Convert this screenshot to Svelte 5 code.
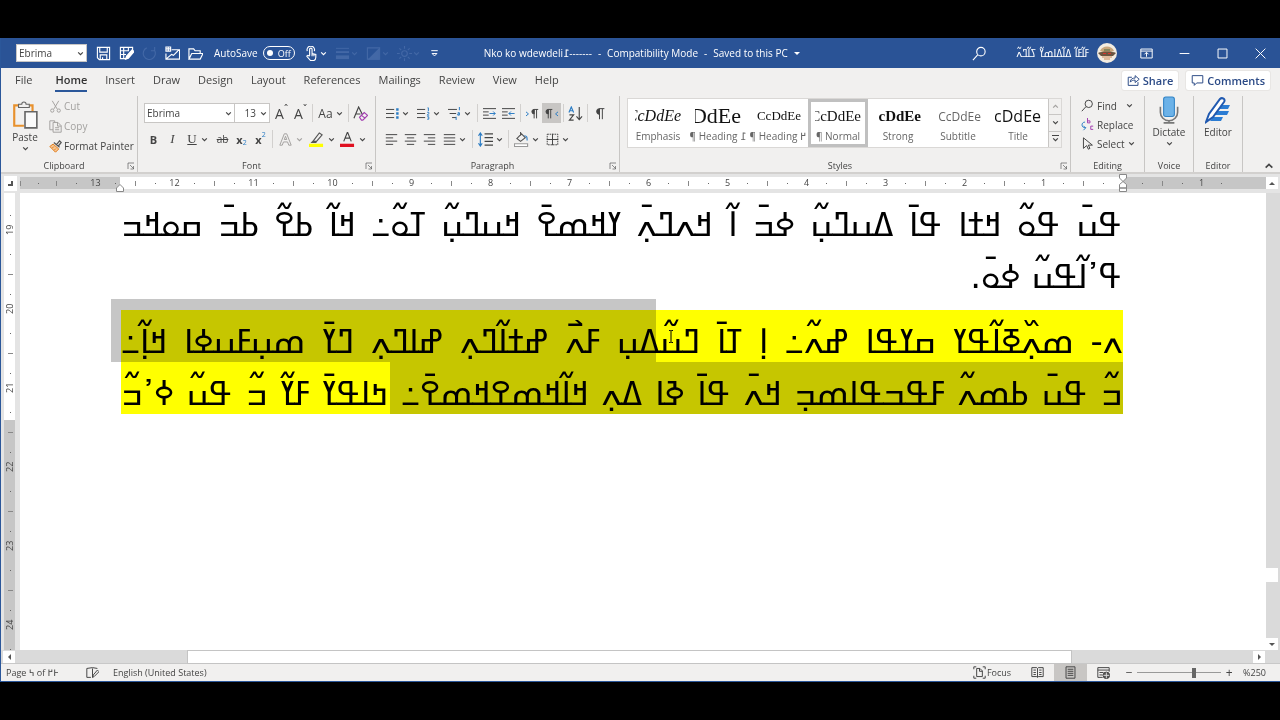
<script>
	const tabs = ['File', 'Home', 'Insert', 'Draw', 'Design', 'Layout', 'References', 'Mailings', 'Review', 'View', 'Help'];

	const styles = [
		{ name: 'Emphasis', cls: 'emphasis', sample: 'CcDdEe' },
		{ name: '¶ Heading ߁', cls: 'heading1', sample: 'DdEe' },
		{ name: '¶ Heading ߂', cls: 'heading2', sample: 'CcDdEe' },
		{ name: '¶ Normal', cls: 'normal', sample: 'CcDdEe' },
		{ name: 'Strong', cls: 'strong', sample: 'cDdEe' },
		{ name: 'Subtitle', cls: 'subtitle', sample: 'CcDdEe' },
		{ name: 'Title', cls: 'title', sample: 'cDdEe' }
	];

	const hRuler = [13, 12, 11, 10, 9, 8, 7, 6, 5, 4, 3, 2, 1, '', 1];
	const vRuler = [19, 20, 21, 22, 23, 24];

	let fontName = $state('Ebrima');
	let fontSize = $state('13');
	let zoom = $state(68);
	let activeTab = $state('Home');
	let activeStyle = $state('¶ Normal');

	// icon bodies, drawn on a 16 x 16 grid
	const icons = {
		save: '<path d="M1.5 1.5h13v13h-11l-2-2z"/><path d="M4 1.5v5h8v-5M4.500 14.500v-5h7v5M7 12v2.500"/>',
		saveAs: '<path d="M8 13.500H1.500v-12h13V5M1.500 5h8M1.500 9h6M5 1.500v12M10 1.500v4"/><path d="M7 14l1-3 6-7 2 2-6 7z" fill="#fff"/>',
		redo: '<path d="M13 4a6.500 6.500 0 1 1-8-2M13.500 1v4h-4"/>',
		mail: '<path d="M7 4h8.500v10H1V8M1 14l6-5 2 1 6-6"/><path d="M1 1h5v4.500H1zM3.500 1v4.500M1 3h5"/>',
		open: '<path d="M1 14V3h5l1.500 2H13v3M1 14l3-6h12l-3 6z"/>',
		touch: '<path d="M6 10V3.500a1.300 1.300 0 0 1 2.600 0V8l4 1v3c0 2-1 3-2 3.500H7L3 11c0-1 1-1.500 3 0M8.600 8v3M10.600 8.500v2.500"/><path d="M3.500 5.500a4 4 0 1 1 7.500 0"/>',
		bars: '<path d="M1 2.500h14" stroke-width="1"/><path d="M1 6.500h14" stroke-width="2"/><path d="M1 12h14" stroke-width="4"/>',
		fill: '<path d="M1.500 2h13v12h-13z"/><path d="M14 3v11H3z" fill="currentColor"/>',
		sun: '<circle cx="8" cy="8" r="3"/><path d="M8 0v3M8 13v3M0 8h3M13 8h3M2.500 2.500l2 2M11.500 11.500l2 2M13.500 2.500l-2 2M4.500 11.500l-2 2"/>',
		customize: '<path d="M4 4.500h8"/><path d="M5 8h6l-3 3z"/>',
		search: '<circle cx="9.500" cy="6" r="4.500"/><path d="M6 9.500L1 15"/>',
		ribbon: '<path d="M1 2.500h14v11H1zM1 5h14"/><path d="M8 12V7M5.500 9L8 6.500 10.500 9"/>',
		min: '<path d="M2 8h12"/>',
		max: '<path d="M2.500 2.500h11v11h-11z"/>',
		close: '<path d="M2 2l12 12M14 2L2 14"/>',
		share: '<path d="M6 4H1.500v10h12v-4"/><path d="M4 10c0-4 3-5 6-5V2l5 4.500-5 4V7.500C7.500 7.500 5.500 8 4 10z"/>',
		comment: '<path d="M1.500 2h13v9H7l-3 3v-3H1.500z"/>',
		cut: '<path d="M4 1l6 10M12 1L6 11"/><circle cx="4" cy="13" r="2"/><circle cx="12" cy="13" r="2"/>',
		copy: '<path d="M5 12H1V1h6v2"/><path d="M5 3h6l4 4v8H5zM10.500 3v4.500H15M7.500 9.500h5M7.500 12h5"/>',
		painter: '<path d="M9 6l4-5 2 2-4 5M6 3l7 6" stroke="#555" stroke-width="1.500"/><path d="M5 5l7 6-4 4-7-7z" fill="#f6c591" stroke="#e07b1a"/><path d="M4 10l2-2M6.500 12.500l2-2" stroke="#e07b1a"/>',
		clear: '<path d="M1 13L6 1l4 8M3 8.500h5" stroke="#444"/><path d="M7 12l5-5 3.500 3-5 5H9z" stroke="#a33fb0"/><path d="M9 10l4 3" stroke="#a33fb0"/>',
		effects: '<path d="M1 15L6.500 1h3L15 15h-3l-1.500-4h-5L4 15zM6.500 8h3L8 4z"/>',
		marker: '<path d="M5 9l6-8 3 2-6 7H5zM5 9l-2 2h5" stroke="#555"/><path d="M0 12.500h15V16H0z" fill="#ff0" stroke="none"/>',
		color: '<path d="M4 10L8 0l4 10M5.300 6.500h5.400" stroke="#444"/><path d="M0 12.500h15V16H0z" fill="#e01020" stroke="none"/>',
		bullets: '<path d="M0 3h10M0 8h10M0 13h10"/><path d="M12.500 1.500h3v3h-3zM12.500 6.500h3v3h-3zM12.500 11.500h3v3h-3z" fill="#2b7cc4" stroke="none"/>',
		numbering: '<path d="M0 3h10M0 8h10M0 13h10"/><path d="M13 1h1v4M12.500 6.500h2v1.500l-2 2h2.500M12.500 12h2v3h-2" stroke="#2b7cc4"/>',
		multilevel: '<path d="M0 3h11M2 8h8M5 13h5"/><path d="M14 0v4M12 7h2v3h-2v-1.500h2M10 12v4" stroke="#2b7cc4"/>',
		indent: '<path d="M0 2h16M0 6h7M0 10h7M0 14h16"/><path d="M8 8h7M12.500 5.500L15 8l-2.500 2.500" stroke="#2b7cc4"/>',
		outdent: '<path d="M0 2h16M0 6h7M0 10h7M0 14h16"/><path d="M8.500 8h7M11 5.500L8.500 8l2.500 2.500" stroke="#2b7cc4"/>',
		ltr: '<path d="M0 6l3 2.500L0 11" stroke="#2b7cc4"/><path d="M10 14V3h5M13 3v11"/><path d="M10 3a2.500 2.500 0 0 0 0 5.500z" fill="currentColor"/>',
		rtl: '<path d="M16 6l-3 2.500 3 2.500" stroke="#2b7cc4"/><path d="M4 14V3h5M7 3v11"/><path d="M4 3a2.500 2.500 0 0 0 0 5.500z" fill="currentColor"/>',
		sort: '<path d="M1 7l2.500-6L6 7M2 5h3" stroke="#2b7cc4"/><path d="M1.500 9.500h4.500L1.500 15H6M12 1v13M9 11l3 3.500 3-3.500"/>',
		pilcrow: '<path d="M8 15V2h6M11.500 2v13"/><path d="M8 2a3.500 3.500 0 0 0 0 7z" fill="currentColor"/>',
		left: '<path d="M1 2h14M1 6h9M1 10h14M1 14h9"/>',
		center: '<path d="M1 2h14M3.500 6h9M1 10h14M3.500 14h9"/>',
		right: '<path d="M1 2h14M6 6h9M1 10h14M6 14h9"/>',
		justify: '<path d="M1 2h14M1 6h14M1 10h14M1 14h14"/>',
		spacing: '<path d="M7 2h9M7 6h9M7 10h9M7 14h9"/><path d="M2.500 1v14M.5 4l2-3 2 3M.5 12l2 3 2-3" stroke="#2b7cc4"/>',
		shading: '<path d="M3 7l5-5 4 4-5 4zM7 4V0" stroke="#555"/><path d="M11 4c3 0 3 2 3 5" stroke="#2b7cc4"/><path d="M.5 12.500h14V15.500H.5z" fill="#fff" stroke="#999"/>',
		borders: '<path d="M1.500 1.500h13v13h-13z" stroke-dasharray="2 1"/><path d="M8 1v14M1 8h14"/>',
		replace: '<path d="M8 0v6M8 3.500h3V6H8M15 10h-3v4h3" stroke="#a33fb0"/><path d="M5 5C0 5 0 12 5 12M3 10l3 2-3 3" stroke="#2b7cc4"/>',
		select: '<path d="M3 1v13l4-3.500 2 4.500 2-1-2-4h5z"/>',
		proof: '<path d="M8 3v11M1 3l7-1 6 1M1 3v11h5"/><path d="M8 14l1-3 5-6 2 2-6 6z"/>',
		focus: '<path d="M1 4V1h3M12 1h3v3M15 12v3h-3M4 15H1v-3"/><path d="M4.500 3h4l3 3v7h-7zM8 3v3.500h3.500"/>',
		read: '<path d="M8 3v11M1 2h6l1 1 1-1h6v11H9l-1 1-1-1H1zM3 5h3M3 8h3M3 10.500h3M10 5h3M10 8h3M10 10.500h3"/>',
		print: '<path d="M2.500 1h11v14h-11zM4.500 4h7M4.500 6.500h7M4.500 9h7M4.500 11.500h7"/>',
		web: '<path d="M7 14H1V2h14v5M1 5h14M3 8h5M3 11h4"/><circle cx="11.500" cy="11.500" r="4" fill="#555"/><path d="M8 11.500h7M11.500 8v7" stroke="#ddd"/>',
		launch: '<path d="M2 14V2h12M6 6l7 7M13 8v6H7"/>'
	};
</script>

{#snippet icon(name, size = 'm')}
	<svg class="ico {size}" viewBox="0 0 16 16" aria-hidden="true">{@html icons[name]}</svg>
{/snippet}

{#snippet chevron()}
	<svg class="chev" viewBox="0 0 6 6" aria-hidden="true"><path d="M1 2l2 2 2-2" /></svg>
{/snippet}

{#snippet footer(label, launcher = true)}
	<div class="footer">
		<span>{label}</span>
		{#if launcher}
			<button aria-label="{label} settings">{@render icon('launch', 'xs')}</button>
		{/if}
	</div>
{/snippet}

<div class="screen">
	<div class="window">
		<header class="titlebar">
			<label class="combo quickfont">
				<select bind:value={fontName} aria-label="Font">
					<option>Ebrima</option>
				</select>
				{@render chevron()}
			</label>
			<div class="quick">
				<button aria-label="Save">{@render icon('save')}</button>
				<button aria-label="Save as">{@render icon('saveAs')}</button>
				<button aria-label="Redo" class="dim">{@render icon('redo')}</button>
				<button aria-label="Email">{@render icon('mail')}</button>
				<button aria-label="Open">{@render icon('open')}</button>
			</div>
			<label class="autosave">
				AutoSave
				<input type="checkbox" />
				<span class="toggle">Off</span>
			</label>
			<div class="quick tools">
				<button aria-label="Touch mode">{@render icon('touch')}{@render chevron()}</button>
				<button aria-label="Line weight" class="dim">{@render icon('bars')}{@render chevron()}</button>
				<button aria-label="Shape fill" class="dim">{@render icon('fill')}{@render chevron()}</button>
				<button aria-label="Brightness" class="dim">{@render icon('sun')}{@render chevron()}</button>
				<button aria-label="Customize toolbar">{@render icon('customize', 's')}</button>
			</div>
			<div class="doctitle">
				<span>Nko ko wdewdeli߁-------</span><span>-</span><span>Compatibility Mode</span><span>-</span><span>Saved to this PC</span>
				<i class="down"></i>
			</div>
			<div class="account">
				<button aria-label="Search">{@render icon('search')}</button>
				<span class="user" dir="rtl">ߓߊ߬ߓߊ߬ ߡߊ߬ߡߊߘߌ߬ ߖߊ߬ߣߍ߬</span>
				<svg class="avatar" viewBox="0 0 20 20" aria-hidden="true">
					<circle cx="10" cy="10" r="10" fill="#f3ece0" />
					<path d="M3 8c2-6 12-6 14 0l-3 1H6z" fill="#c9a67c" />
					<path d="M1 10c4-2 14-2 18 0l-3 3H4z" fill="#6b5540" />
					<path d="M5 14h10M7 16h6" stroke="#c98a5a" />
					<path d="M6 10.500h3M11 10.500h3" stroke="#d8362c" />
					<path d="M7 7h6" stroke="#48683e" />
				</svg>
			</div>
			<div class="winbtns">
				<button aria-label="Ribbon display options">{@render icon('ribbon', 's')}</button>
				<button aria-label="Minimize">{@render icon('min', 's')}</button>
				<button aria-label="Maximize">{@render icon('max', 's')}</button>
				<button aria-label="Close">{@render icon('close', 's')}</button>
			</div>
		</header>

		<nav class="tabs">
			{#each tabs as tab}
				<a href="#{tab}" class:active={tab === activeTab} onclick={() => (activeTab = tab)}>{tab}</a>
			{/each}
			<div class="collab">
				<button>{@render icon('share', 's')}Share</button>
				<button>{@render icon('comment', 's')}Comments</button>
			</div>
		</nav>

		<section class="ribbon">
			<div class="group clipboard">
				<div class="content">
					<button class="big">
						<svg class="paste" viewBox="0 0 24 26" aria-hidden="true">
							<path d="M8 4H2v19h9M16 4h3v6" fill="none" stroke="#e8912d" stroke-width="2" />
							<path d="M6 6V3h3a2 2 0 0 1 4 0h3v3z" fill="#f1f0ef" stroke="#666" />
							<path d="M12 10h11v15H12z" fill="#fafafa" stroke="#666" stroke-width="1.500" />
						</svg>
						Paste
						{@render chevron()}
					</button>
					<div class="stack">
						<button class="off">{@render icon('cut', 's')}Cut</button>
						<button class="off">{@render icon('copy', 's')}Copy</button>
						<button>{@render icon('painter', 's')}Format Painter</button>
					</div>
				</div>
				{@render footer('Clipboard')}
			</div>

			<div class="group font">
				<div class="rows">
					<div class="row">
						<label class="combo name">
							<select bind:value={fontName} aria-label="Font name">
								<option>Ebrima</option>
							</select>
							{@render chevron()}
						</label>
						<label class="combo size">
							<select bind:value={fontSize} aria-label="Font size">
								<option>13</option>
							</select>
							{@render chevron()}
						</label>
						<button class="resize">A<sup>ˆ</sup></button>
						<button class="resize">A<sup>ˇ</sup></button>
						<i class="sep"></i>
						<button class="case">Aa{@render chevron()}</button>
						<i class="sep"></i>
						<button aria-label="Clear formatting">{@render icon('clear')}</button>
					</div>
					<div class="row letters">
						<button><b>B</b></button>
						<button><em>I</em></button>
						<button><u>U</u>{@render chevron()}</button>
						<button><s>ab</s></button>
						<button><b>x</b><sub>2</sub></button>
						<button><b>x</b><sup>2</sup></button>
						<i class="sep"></i>
						<button aria-label="Text effects" class="off">{@render icon('effects', 's')}{@render chevron()}</button>
						<button aria-label="Highlight">{@render icon('marker')}{@render chevron()}</button>
						<button aria-label="Font color">{@render icon('color')}{@render chevron()}</button>
					</div>
				</div>
				{@render footer('Font')}
			</div>

			<div class="group paragraph">
				<div class="rows">
					<div class="row">
						<button aria-label="Bullets">{@render icon('bullets', 's')}{@render chevron()}</button>
						<button aria-label="Numbering">{@render icon('numbering', 's')}{@render chevron()}</button>
						<button aria-label="Multilevel list">{@render icon('multilevel', 's')}{@render chevron()}</button>
						<i class="sep"></i>
						<button aria-label="Decrease indent">{@render icon('indent', 's')}</button>
						<button aria-label="Increase indent">{@render icon('outdent', 's')}</button>
						<i class="sep"></i>
						<button aria-label="Left to right">{@render icon('ltr', 's')}</button>
						<button aria-label="Right to left" class="pressed">{@render icon('rtl', 's')}</button>
						<i class="sep"></i>
						<button aria-label="Sort">{@render icon('sort')}</button>
						<i class="sep"></i>
						<button aria-label="Show marks">{@render icon('pilcrow', 's')}</button>
					</div>
					<div class="row">
						<button aria-label="Align left">{@render icon('left', 's')}</button>
						<button aria-label="Center">{@render icon('center', 's')}</button>
						<button aria-label="Align right">{@render icon('right', 's')}</button>
						<button aria-label="Justify">{@render icon('justify', 's')}{@render chevron()}</button>
						<i class="sep"></i>
						<button aria-label="Line spacing">{@render icon('spacing')}{@render chevron()}</button>
						<i class="sep"></i>
						<button aria-label="Shading">{@render icon('shading')}{@render chevron()}</button>
						<button aria-label="Borders">{@render icon('borders', 's')}{@render chevron()}</button>
					</div>
				</div>
				{@render footer('Paragraph')}
			</div>

			<div class="group styles">
				<div class="gallery">
					<div class="cards">
						{#each styles as s}
							<button class="card" class:current={s.name === activeStyle} onclick={() => (activeStyle = s.name)}>
								<span class="sample {s.cls}">{s.sample}</span>
								<span class="stylename">{s.name}</span>
							</button>
						{/each}
					</div>
					<div class="scroller">
						<button aria-label="Previous styles" class="up">{@render chevron()}</button>
						<button aria-label="Next styles">{@render chevron()}</button>
						<button aria-label="All styles" class="more">{@render chevron()}</button>
					</div>
				</div>
				{@render footer('Styles')}
			</div>

			<div class="group editing">
				<div class="stack">
					<button>{@render icon('search', 's')}Find <i class="space"></i>{@render chevron()}</button>
					<button>{@render icon('replace', 's')}Replace</button>
					<button>{@render icon('select', 's')}Select{@render chevron()}</button>
				</div>
				{@render footer('Editing', false)}
			</div>

			<div class="group voice">
				<button class="big">
					<svg class="paste" viewBox="0 0 24 26" aria-hidden="true">
						<path d="M4 10v5a8 8 0 0 0 16 0v-5M12 23v2M7 25h10" fill="none" stroke="#777" stroke-width="1.500" />
						<rect x="7" y="1" width="10" height="18" rx="2" fill="#6cb2e8" stroke="#3384c6" />
					</svg>
					Dictate
					{@render chevron()}
				</button>
				{@render footer('Voice', false)}
			</div>

			<div class="group editor">
				<button class="big">
					<svg class="paste" viewBox="0 0 26 26" aria-hidden="true">
						<path d="M13 8h12l-2 4H11zM10 14h14l-2 4H8zM8 20h10l-2 4H5z" fill="#2b7cd3" />
						<path d="M1 25l3-8L15 2c2-2 6 0 4 3L8 20z" fill="#fff" stroke="#2059b0" stroke-width="2" />
					</svg>
					Editor
				</button>
				{@render footer('Editor', false)}
			</div>

			<button class="collapse" aria-label="Collapse ribbon">{@render chevron()}</button>
		</section>

		<main class="workspace">
			<button class="corner" aria-label="Tab stop"><i></i></button>
			<div class="hruler">
				<div class="scale">
					<div class="unit part"><i class="tick"></i><i class="dot"></i></div>
					{#each hRuler as n}
						<div class="unit"><i class="tick"></i><i class="dot"></i><span>{n}</span><i class="dot"></i></div>
					{/each}
				</div>
				<svg class="marker start" viewBox="0 0 8 8"><path d="M.5 7.500V4L4 .5 7.500 4v3.500z" /></svg>
				<svg class="marker end" viewBox="0 0 8 18"><path d="M.5.5h7V4L4 7.500.5 4zM.5 14v-3.500L4 7.500l3.500 3V14zM.5 14h7v3.500h-7z" /></svg>
			</div>
			<button class="arrow" aria-label="Scroll up"><i class="tri n"></i></button>

			<div class="vruler">
				<div class="vscale">
					{#each vRuler as n}
						<div class="vunit"><i class="dot"></i><span>{n}</span><i class="dot"></i><i class="tick"></i></div>
					{/each}
				</div>
			</div>
			<article class="doc" dir="rtl" lang="nqo">
				<p>
					<span class="line">ߟߎ߫ ߟߋ߬ ߞߙߊ ߟߊ߫ ߡߎߣߎ߲߬ ߦߏ߫ ߊ߬ ߞߍߣߍ߲߫ ߌߞߘߐ߫ ߞߎߣߎ߲߬ ߠߋ߬߸ ߞߊ߬ ߕߐ߬ ߕߏ߫ ߛߋߞߏ</span>
					<span class="line last">ߟߴߊ߬ߟߎ߬ ߦߋ߫.</span>
				</p>
				<p class="highlight">
					<span class="line">
						ߍ- ߘߍ߲߰ߧߊ߬ߟߌ ߛߌߟߊ ߝߍ߬߸ ߊ߲ ߠߊ߫ ߣߎ߬ߡߎ߲ ߓߍ߯ ߝߙߊ߬ߣߍ߲ ߝߊߣߍ߲ ߣߌ߫ ߘߎ߲ߓߎߦߊ ߞߊ߲߬߸<i class="selected first"></i>
						<svg class="ibeam" viewBox="0 0 6 13" aria-hidden="true"><path d="M1 .5h1.500l.5.5.5-.5H5M3 1v11M1 12.500h1.500L3 12l.5.500H5" /></svg>
					</span>
					<span class="line">ߏ߬ ߟߎ߫ ߕߘߍ߬ ߓߟߏߟߊߘߏ߲ ߞߍ߫ ߟߊ߫ ߢߊ ߡߍ߲ ߞߊ߬ߞߘߐߞߘߐ߫߸ ߤߊߟߌ߫ ߓߌ߬ ߏ߬ ߟߎ߬ ߦߴߏ߬<i class="selected second"></i></span>
				</p>
			</article>
			<div class="vscroll">
				<i class="thumb"></i>
				<button class="arrow" aria-label="Scroll down"><i class="tri s"></i></button>
			</div>

			<div class="hscroll">
				<button class="arrow" aria-label="Scroll left"><i class="tri w"></i></button>
				<div class="track"><i class="thumb"></i></div>
				<button class="arrow" aria-label="Scroll right"><i class="tri e"></i></button>
			</div>
		</main>

		<footer class="status">
			<span class="pages">Page ߆ of ߅߂</span>
			<button aria-label="Proofing">{@render icon('proof', 's')}</button>
			<span class="lang">English (United States)</span>
			<div class="views">
				<button>{@render icon('focus', 's')}Focus</button>
				<button aria-label="Read mode">{@render icon('read', 's')}</button>
				<button aria-label="Print layout" class="pressed">{@render icon('print', 's')}</button>
				<button aria-label="Web layout">{@render icon('web', 's')}</button>
			</div>
			<div class="zoom">
				<button aria-label="Zoom out">−</button>
				<input type="range" min="0" max="100" bind:value={zoom} aria-label="Zoom" />
				<button aria-label="Zoom in">+</button>
				<span>%250</span>
			</div>
		</footer>
	</div>
</div>

<style>
	:global(body) {
		margin: 0;
		background: #000;
	}

	.screen {
		box-sizing: border-box;
		min-height: 100vh;
		padding: 38px 0;
		display: flex;
		background: #000;
		font-family: 'Open Sans', 'Noto Sans', 'DejaVu Sans', sans-serif;
		font-size: 10px;
		color: #444;
	}

	.window {
		flex: 1;
		min-width: 0;
		display: flex;
		flex-direction: column;
		border-left: 1px solid #2b579a;
		border-bottom: 1px solid #2b579a;
		background: #f1f0ef;
	}

	button,
	select {
		font: inherit;
		color: inherit;
		background: none;
		border: 0;
		padding: 0;
		margin: 0;
	}

	button {
		display: flex;
		align-items: center;
		justify-content: center;
		white-space: nowrap;
	}

	.ico {
		width: 15px;
		height: 15px;
		flex: none;
		fill: none;
		stroke: currentColor;
		stroke-width: 1.2;
	}

	.ico.s {
		width: 13px;
		height: 13px;
	}

	.ico.xs {
		width: 8px;
		height: 8px;
	}

	.chev {
		width: 7px;
		height: 7px;
		flex: none;
		fill: none;
		stroke: currentColor;
	}

	/* title bar */
	.titlebar {
		display: flex;
		align-items: center;
		height: 30px;
		background: #2a5396;
		color: #fff;
	}

	.combo {
		box-sizing: border-box;
		display: flex;
		align-items: center;
		height: 20px;
		padding: 0 2px;
		background: #fff;
		border: 1px solid #c8c6c4;
		color: #444;
	}

	.combo select {
		appearance: none;
		flex: 1;
		min-width: 0;
		outline: 0;
	}

	.quickfont {
		width: 71px;
		height: 18px;
		margin-left: 15px;
	}

	.quick {
		display: flex;
		gap: 8px;
		margin-left: 9px;
	}

	.dim {
		color: #4368a6;
	}

	.autosave {
		display: flex;
		align-items: center;
		gap: 5px;
		margin-left: 11px;
	}

	.autosave input {
		position: absolute;
		opacity: 0;
	}

	.toggle {
		box-sizing: border-box;
		display: flex;
		align-items: center;
		gap: 5px;
		width: 32px;
		height: 14px;
		padding-left: 3px;
		border: 1px solid #fff;
		border-radius: 7px;
		font-size: 9px;
	}

	.toggle::before {
		content: '';
		width: 6px;
		height: 6px;
		border-radius: 50%;
		background: #fff;
	}

	.tools button {
		gap: 1px;
	}

	.doctitle {
		display: flex;
		align-items: center;
		gap: 6px;
		margin: 0 auto 0 43px;
		white-space: nowrap;
	}

	.down {
		border: 3px solid transparent;
		border-top-color: #fff;
		border-bottom: 0;
	}

	.account {
		display: flex;
		align-items: center;
		gap: 8px;
	}

	.user {
		width: 74px;
		margin-left: 20px;
		font-family: 'DejaVu Sans', sans-serif;
		white-space: nowrap;
	}

	.avatar {
		width: 20px;
		height: 20px;
	}

	.winbtns {
		display: flex;
		gap: 25px;
		margin: 0 13px 0 23px;
	}

	/* tabs */
	.tabs {
		display: flex;
		align-items: flex-start;
		gap: 18px;
		height: 28px;
		padding: 0 10px 0 14px;
		font-size: 11px;
	}

	.tabs a {
		color: #444;
		text-decoration: none;
		line-height: 20px;
		padding-top: 2px;
	}

	.tabs a:first-child {
		margin-right: 5px;
	}

	.tabs a.active {
		font-weight: 600;
		color: #333;
		border-bottom: 2px solid #2b579a;
	}

	.collab {
		display: flex;
		gap: 8px;
		margin: 3px 0 0 auto;
	}

	.collab button {
		gap: 3px;
		height: 19px;
		padding: 0 5px;
		background: #fff;
		border-radius: 2px;
		color: #2b4a86;
		font-weight: 600;
		outline: 1px solid #e8e6e4;
	}

	/* ribbon */
	.ribbon {
		display: flex;
		height: 76px;
		border-bottom: 2px solid #d2d0ce;
	}

	.group {
		position: relative;
		box-sizing: border-box;
		display: flex;
		flex-direction: column;
		justify-content: space-between;
		border-right: 1px solid #c8c6c4;
	}

	.clipboard {
		width: 137px;
	}

	.font {
		width: 238px;
	}

	.paragraph {
		width: 244px;
	}

	.styles {
		flex: 1;
		min-width: 0;
	}

	.editing {
		width: 74px;
	}

	.voice,
	.editor {
		width: 49px;
	}

	.footer {
		display: flex;
		align-items: center;
		height: 13px;
		font-size: 9px;
	}

	.footer span {
		flex: 1;
		text-align: center;
	}

	.footer button {
		margin-right: 2px;
	}

	.content {
		display: flex;
	}

	.big {
		flex-direction: column;
		gap: 1px;
		width: 48px;
		line-height: 14px;
	}

	.paste {
		width: 26px;
		height: 28px;
	}

	.off {
		color: #a3a19f;
	}

	.stack {
		display: flex;
		flex-direction: column;
		align-items: flex-start;
	}

	.stack button {
		gap: 2px;
		height: 20px;
	}

	.editing .stack {
		padding-left: 10px;
	}

	.editing .stack button {
		gap: 3px;
		height: 19px;
	}

	.space {
		width: 3px;
	}

	.rows {
		display: flex;
		flex-direction: column;
		gap: 6px;
		padding: 7px 0 0 6px;
	}

	.row {
		display: flex;
		align-items: center;
		height: 20px;
	}

	.row button {
		height: 20px;
		min-width: 19px;
		gap: 3px;
	}

	.row button:has(.chev) {
		min-width: 31px;
	}

	.sep {
		width: 1px;
		height: 18px;
		margin: 0 2px;
		background: #d2d0ce;
	}

	.name {
		width: 91px;
	}

	.size {
		width: 36px;
		margin: 0 2px 0 -1px;
	}

	.size select {
		text-align: right;
		padding-right: 4px;
	}

	.row .resize {
		font-size: 14px;
		gap: 0;
	}

	.resize sup {
		color: #444;
		font-size: 10px;
	}

	.row .case {
		font-size: 12px;
	}

	.letters button {
		font-size: 11px;
		gap: 0;
	}

	.letters button:has(.chev) {
		gap: 4px;
	}

	.letters em,
	.letters u {
		font-family: 'Liberation Serif', serif;
		font-size: 13px;
	}

	.letters s {
		font-size: 10px;
	}

	sup,
	sub {
		font-size: 7px;
		line-height: 8px;
		color: #2b7cc4;
	}

	sup {
		align-self: flex-start;
		padding-top: 2px;
	}

	sub {
		align-self: flex-end;
		padding-bottom: 2px;
	}

	.pressed {
		background: #c8c6c4;
	}

	/* styles gallery */
	.gallery {
		display: flex;
		height: 50px;
		margin: 2px 8px 0 7px;
		background: #fff;
		box-sizing: border-box;
		border: 1px solid #dad8d6;
	}

	.cards {
		flex: 1;
		min-width: 0;
		display: grid;
		grid-template-columns: repeat(7, 60px);
		justify-content: space-evenly;
	}

	.card {
		box-sizing: border-box;
		flex-direction: column;
		justify-content: space-between;
		padding: 4px 0 1px;
		border: 3px solid transparent;
	}

	.card.current {
		border-color: #c0c0c0;
	}

	.sample {
		display: flex;
		justify-content: flex-end;
		align-items: center;
		width: 46px;
		height: 20px;
		overflow: hidden;
		color: #111;
		font-family: 'Liberation Serif', serif;
		font-size: 15px;
	}

	.emphasis {
		font-style: italic;
		font-size: 16px;
	}

	.heading1 {
		font-size: 22px;
	}

	.heading2 {
		font-size: 13px;
	}

	.strong {
		font-weight: bold;
	}

	.subtitle {
		font-family: 'Open Sans', sans-serif;
		font-size: 12px;
		color: #666;
	}

	.title {
		font-family: 'Open Sans', sans-serif;
		font-size: 16px;
	}

	.stylename {
		color: #666;
		line-height: 14px;
	}

	.scroller {
		display: flex;
		flex-direction: column;
		width: 12px;
		border-left: 1px solid #c8c6c4;
	}

	.scroller button {
		flex: 1;
		background: #f1f0ef;
	}

	.scroller button + button {
		border-top: 1px solid #c8c6c4;
	}

	.up .chev,
	.collapse .chev {
		transform: rotate(180deg);
	}

	.up {
		color: #a3a19f;
	}

	.more {
		flex-direction: column;
	}

	.more::before {
		content: '';
		width: 7px;
		height: 1px;
		background: #444;
	}

	.collapse {
		align-self: flex-end;
		width: 37px;
		height: 12px;
		padding-left: 14px;
	}

	.collapse .chev {
		width: 10px;
		height: 10px;
	}

	/* document area */
	.workspace {
		flex: 1;
		display: grid;
		grid-template-columns: 19px minmax(0, 1fr) 14px;
		grid-template-rows: 19px 1fr 14px;
		background: #e4e4e4;
	}

	.corner {
		margin: 2px 3px;
		background: #fff;
	}

	.corner i {
		width: 3px;
		height: 3px;
		border: solid #555;
		border-width: 0 2px 2px 0;
	}

	.hruler {
		position: relative;
		height: 12px;
		margin: 3px 0 4px;
		background: linear-gradient(to right, #c6c6c6 100px, #fff 100px, #fff calc(100% - 143px), #c6c6c6 calc(100% - 143px));
	}

	.scale {
		display: flex;
		height: 12px;
		overflow: hidden;
	}

	.unit {
		flex: none;
		display: grid;
		grid-template-columns: repeat(4, 1fr);
		justify-items: start;
		align-items: center;
		width: 79px;
		font-size: 9px;
		line-height: 12px;
	}

	.part {
		grid-template-columns: 1fr 1fr;
		width: 36px;
	}

	.unit span {
		width: 12px;
		margin-left: -6px;
		text-align: center;
	}

	.tick {
		width: 1px;
		height: 5px;
		background: #888;
	}

	.dot {
		width: 1px;
		height: 1px;
		background: #666;
	}

	.marker {
		position: absolute;
		width: 8px;
		fill: #fff;
		stroke: #888;
	}

	.marker.start {
		left: 96px;
		bottom: -3px;
		height: 8px;
	}

	.marker.end {
		right: 139px;
		top: -3px;
		height: 18px;
	}

	.arrow {
		width: 12px;
		height: 12px;
		background: #fff;
	}

	.workspace > .arrow {
		margin-top: 3px;
	}

	.tri {
		border: 3px solid transparent;
	}

	.tri.n {
		border-bottom-color: #555;
		border-top: 0;
	}

	.tri.s {
		border-top-color: #555;
		border-bottom: 0;
	}

	.tri.w {
		border-right-color: #555;
		border-left: 0;
	}

	.tri.e {
		border-left-color: #555;
		border-right: 0;
	}

	.vruler {
		margin: 0 5px 0 3px;
		background: linear-gradient(#fff 227px, #c6c6c6 227px);
		contain: size;
		overflow: hidden;
	}

	.vscale {
		display: flex;
		flex-direction: column;
		padding-top: 3px;
	}

	.vunit {
		flex: none;
		display: grid;
		grid-template-rows: repeat(4, 1fr);
		justify-items: center;
		height: 79px;
		font-size: 9px;
	}

	.vunit i {
		align-self: end;
	}

	.vunit span {
		height: 12px;
		align-self: end;
		writing-mode: vertical-rl;
		transform: rotate(180deg);
		line-height: 12px;
		text-align: center;
	}

	.vunit .tick {
		width: 5px;
		height: 1px;
	}

	.doc {
		padding: 0 143px 0 101px;
		background: #fff;
		color: #000;
		font-family: 'DejaVu Sans', sans-serif;
		font-size: 34px;
	}

	p {
		margin: 0 0 13px;
	}

	.line {
		position: relative;
		display: block;
		padding-top: 10px;
		line-height: 42px;
		text-align: justify;
		text-align-last: justify;
		white-space: nowrap;
	}

	.line.last {
		text-align-last: start;
	}

	.highlight {
		background: #ff0;
	}

	.selected {
		position: absolute;
		background: #c6c6c6;
		mix-blend-mode: multiply;
	}

	.selected.first {
		top: -11px;
		bottom: 0;
		left: -10px;
		right: 46.6%;
	}

	.selected.second {
		top: 0;
		bottom: 0;
		left: 26.8%;
		right: 0;
	}

	/* mouse pointer over the text */
	.ibeam {
		position: absolute;
		top: 20px;
		left: 54.6%;
		width: 6px;
		height: 13px;
		fill: none;
		stroke: #000;
	}

	.vscroll {
		display: flex;
		flex-direction: column;
		justify-content: flex-end;
		gap: 56px;
		background: #dadada;
	}

	.vscroll .thumb {
		width: 12px;
		height: 14px;
		background: #fff;
	}

	.hscroll {
		grid-column: 1 / -1;
		display: flex;
		align-items: center;
		padding: 0 15px 0 2px;
		border-bottom: 1px solid #c8c8c8;
		background: #dadada;
	}

	.track {
		flex: 1;
		padding: 0 182px 0 173px;
	}

	.track .thumb {
		display: block;
		height: 12px;
		background: #fff;
		outline: 1px solid #c4c4c4;
	}

	/* status bar */
	.status {
		display: flex;
		align-items: center;
		height: 17px;
		padding: 0 14px 0 5px;
		font-size: 9px;
	}

	.pages {
		width: 80px;
	}

	.lang {
		margin-left: 14px;
	}

	.views {
		display: flex;
		margin-left: auto;
	}

	.views button {
		width: 33px;
		height: 17px;
		gap: 1px;
	}

	.views button:first-child {
		width: auto;
		margin-right: 10px;
	}

	.zoom {
		display: flex;
		align-items: center;
		gap: 3px;
		margin-left: 4px;
	}

	.zoom button {
		width: 10px;
		font-size: 12px;
		line-height: 14px;
	}

	.zoom input {
		appearance: none;
		width: 84px;
		height: 10px;
		margin: 0;
		background: linear-gradient(#999, #999) center / 100% 1px no-repeat;
	}

	.zoom input::-webkit-slider-thumb {
		appearance: none;
		width: 4px;
		height: 10px;
		background: #666;
	}

	.zoom span {
		margin-left: 6px;
	}
</style>
